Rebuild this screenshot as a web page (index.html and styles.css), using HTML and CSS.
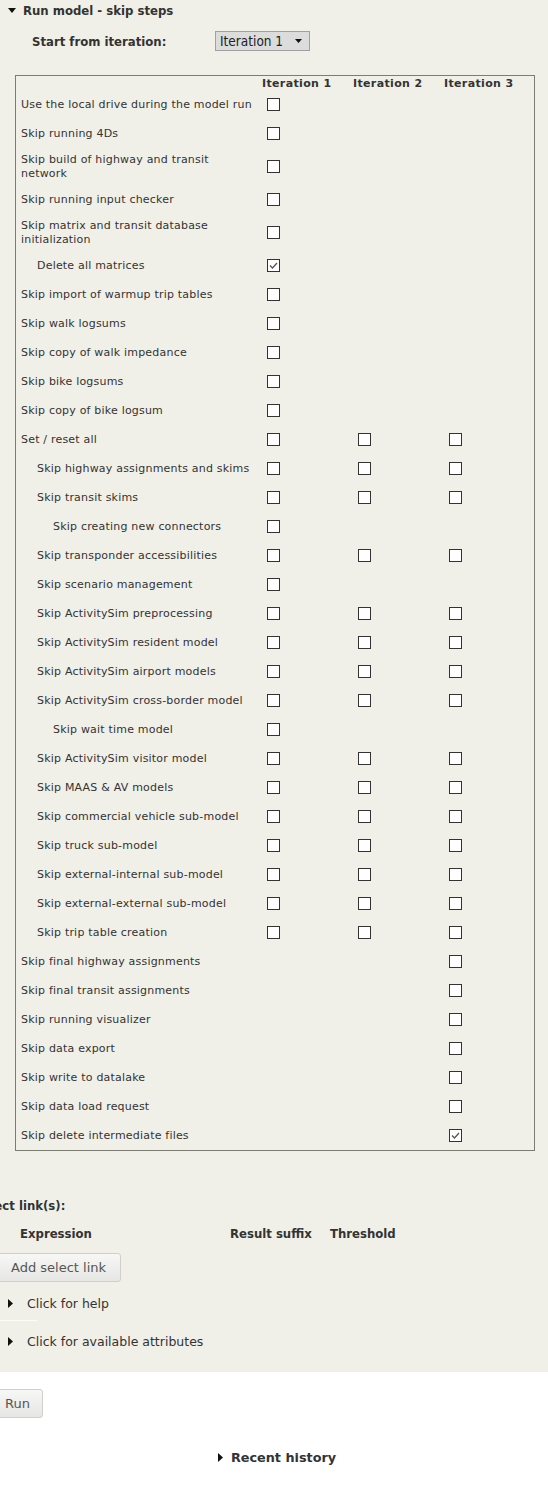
FILE: index.html
```html
<!DOCTYPE html>
<html>
<head>
<meta charset="utf-8">
<link rel="stylesheet" href="styles.css">
</head>
<body>
<div class="panel">
  <div class="section-head">
    <svg class="tri-down" width="8" height="5" viewBox="0 0 8 5"><path d="M0 0H8L4 5Z" fill="#111"/></svg>
    <span class="section-title">Run model - skip steps</span>
  </div>
  <div class="start-row">
    <span class="start-label">Start from iteration:</span>
    <span class="select"><span>Iteration 1</span><svg width="7" height="4" viewBox="0 0 7 4"><path d="M0 0H7L3.5 4Z" fill="#111"/></svg></span>
  </div>

  <div class="steps-box">
    <table class="steps">
      <colgroup><col class="c-label"><col class="c-it"><col class="c-it"><col class="c-it"></colgroup>
      <thead>
        <tr><th></th><th>Iteration 1</th><th>Iteration 2</th><th>Iteration 3</th></tr>
      </thead>
      <tbody id="rows"></tbody>
    </table>
  </div>

  <div class="sl">
    <div class="sl-title">Select link(s):</div>
    <div class="sl-head">
      <span class="h-expr">Expression</span>
      <span class="h-suffix">Result suffix</span>
      <span class="h-thr">Threshold</span>
    </div>
    <button class="btn add-btn">Add select link</button>
    <div class="disclosure"><svg width="5" height="9" viewBox="0 0 5 9"><path d="M0 0L5 4.5L0 9Z" fill="#111"/></svg><span>Click for help</span></div>
    <div class="sep"></div>
    <div class="disclosure second"><svg width="5" height="9" viewBox="0 0 5 9"><path d="M0 0L5 4.5L0 9Z" fill="#111"/></svg><span>Click for available attributes</span></div>
  </div>
</div>

<div class="bottom">
  <button class="btn run-btn">Run</button>
  <div class="history"><svg width="5" height="9" viewBox="0 0 5 9"><path d="M0 0L5 4.5L0 9Z" fill="#111"/></svg><span>Recent history</span></div>
</div>

<script>
var rows = [
  ["Use the local drive during the model run",0,[0]],
  ["Skip running 4Ds",0,[0]],
  ["Skip build of highway and transit network",0,[0]],
  ["Skip running input checker",0,[0]],
  ["Skip matrix and transit database initialization",0,[0]],
  ["Delete all matrices",1,[1]],
  ["Skip import of warmup trip tables",0,[0]],
  ["Skip walk logsums",0,[0]],
  ["Skip copy of walk impedance",0,[0]],
  ["Skip bike logsums",0,[0]],
  ["Skip copy of bike logsum",0,[0]],
  ["Set / reset all",0,[0,0,0]],
  ["Skip highway assignments and skims",1,[0,0,0]],
  ["Skip transit skims",1,[0,0,0]],
  ["Skip creating new connectors",2,[0]],
  ["Skip transponder accessibilities",1,[0,0,0]],
  ["Skip scenario management",1,[0]],
  ["Skip ActivitySim preprocessing",1,[0,0,0]],
  ["Skip ActivitySim resident model",1,[0,0,0]],
  ["Skip ActivitySim airport models",1,[0,0,0]],
  ["Skip ActivitySim cross-border model",1,[0,0,0]],
  ["Skip wait time model",2,[0]],
  ["Skip ActivitySim visitor model",1,[0,0,0]],
  ["Skip MAAS &amp; AV models",1,[0,0,0]],
  ["Skip commercial vehicle sub-model",1,[0,0,0]],
  ["Skip truck sub-model",1,[0,0,0]],
  ["Skip external-internal sub-model",1,[0,0,0]],
  ["Skip external-external sub-model",1,[0,0,0]],
  ["Skip trip table creation",1,[0,0,0]],
  ["Skip final highway assignments",0,[null,null,0]],
  ["Skip final transit assignments",0,[null,null,0]],
  ["Skip running visualizer",0,[null,null,0]],
  ["Skip data export",0,[null,null,0]],
  ["Skip write to datalake",0,[null,null,0]],
  ["Skip data load request",0,[null,null,0]],
  ["Skip delete intermediate files",0,[null,null,1]]
];
var check = '<svg width="11" height="11" viewBox="0 0 11 11"><path d="M2 5.5L4.5 8L9 3" fill="none" stroke="#555" stroke-width="1.3"/></svg>';
var html = "";
rows.forEach(function(r){
  html += '<tr><td class="lbl ind' + r[1] + '">' + r[0] + '</td>';
  for (var i = 0; i < 3; i++) {
    var v = r[2][i];
    html += '<td>' + (v === undefined || v === null ? '' : '<span class="cb">' + (v ? check : '') + '</span>') + '</td>';
  }
  html += '</tr>';
});
document.getElementById("rows").innerHTML = html;
</script>
</body>
</html>
```

FILE: styles.css
```css
html, body {
  margin: 0;
  padding: 0;
  background: #ffffff;
  color: #333;
  font-family: "DejaVu Sans Condensed", "DejaVu Sans", sans-serif;
  overflow-x: hidden;
}

.panel {
  background: #f0f0e8;
  height: 1372px;
  overflow: hidden;
}

.section-head {
  display: flex;
  align-items: center;
  height: 20px;
  padding-left: 8px;
}
.tri-down { margin-right: 7px; }
.section-title {
  font-weight: bold;
  font-size: 13px;
  color: #333;
}

.start-row {
  display: flex;
  align-items: center;
  margin-top: 11px;
  padding-left: 32px;
  height: 20px;
}
.start-label {
  font-weight: bold;
  font-size: 13px;
  width: 183px;
}
.select {
  display: flex;
  align-items: center;
  justify-content: space-between;
  box-sizing: border-box;
  height: 20px;
  width: 95px;
  padding: 0 7px 0 4px;
  background: #dcdcdc;
  border: 1px solid #a0a0a0;
  font-size: 13.5px;
  color: #222;
}

.steps-box {
  margin: 24px 0 0 15px;
  width: 520px;
  box-sizing: border-box;
  border: 1px solid #7c7c72;
}
.steps {
  border-collapse: collapse;
  table-layout: fixed;
  width: 514px;
  font-family: "DejaVu Sans", sans-serif;
  font-size: 11px;
  letter-spacing: 0.2px;
  color: #333;
}
.c-label { width: 241px; }
.c-it { width: 91px; }
.steps th {
  height: 12px;
  padding: 2px 0 0 5px;
  text-align: left;
  font-weight: bold;
  font-size: 11px;
  line-height: 12px;
  letter-spacing: 0.35px;
  white-space: nowrap;
}
.steps td {
  height: 19px;
  padding: 5px 0 5px 5px;
  vertical-align: middle;
  line-height: 13.5px;
}
.steps td.lbl { padding-right: 0; }
.steps td.ind1 { padding-left: 21px; }
.steps td.ind2 { padding-left: 37px; }
.cb {
  display: block;
  width: 11px;
  height: 11px;
  margin-left: 5px;
  border: 1px solid #333;
  background: #fff;
}
.cb svg { display: block; }

.sl {
  margin-left: -20px;
  margin-top: 47px;
}
.sl-title {
  font-weight: bold;
  font-size: 13px;
  line-height: 16px;
  margin-left: -6px;
}
.sl-head {
  display: flex;
  margin-top: 12px;
  font-weight: bold;
  font-size: 13px;
  line-height: 16px;
}
.h-expr { margin-left: 40px; width: 210px; }
.h-suffix { width: 100px; }

.btn {
  font-family: "DejaVu Sans", sans-serif;
  font-size: 13px;
  color: #555;
  background: linear-gradient(#f7f7f5, #e6e6e4);
  border: 1px solid #cfcfcc;
  border-radius: 3px;
  height: 29px;
  box-sizing: border-box;
}
.add-btn {
  display: block;
  margin-top: 11px;
  margin-left: 17px;
  width: 124px;
  padding: 0 0 0 13px;
  text-align: left;
  white-space: nowrap;
}

.disclosure {
  display: flex;
  align-items: center;
  height: 20px;
  margin-top: 11px;
  padding-left: 28px;
  font-family: "DejaVu Sans", sans-serif;
  font-size: 12.5px;
  color: #333;
}
.disclosure svg { margin-right: 14px; }
.sep {
  margin-left: 20px;
  width: 37px;
  height: 1px;
  background: #fbfbf8;
  margin-top: 7px;
  margin-bottom: -1px;
}
.disclosure.second { margin-top: 11px; }

.bottom {
  padding-top: 17px;
}
.run-btn {
  display: block;
  margin-left: -10px;
  width: 53px;
  padding: 0 0 0 14px;
  text-align: left;
}
.history {
  display: flex;
  align-items: center;
  justify-content: center;
  margin-top: 29px;
  height: 20px;
  font-family: "DejaVu Sans", sans-serif;
  font-weight: bold;
  font-size: 12.8px;
  color: #333;
  padding-left: 6px;
}
.history svg { margin-right: 8px; }
```
